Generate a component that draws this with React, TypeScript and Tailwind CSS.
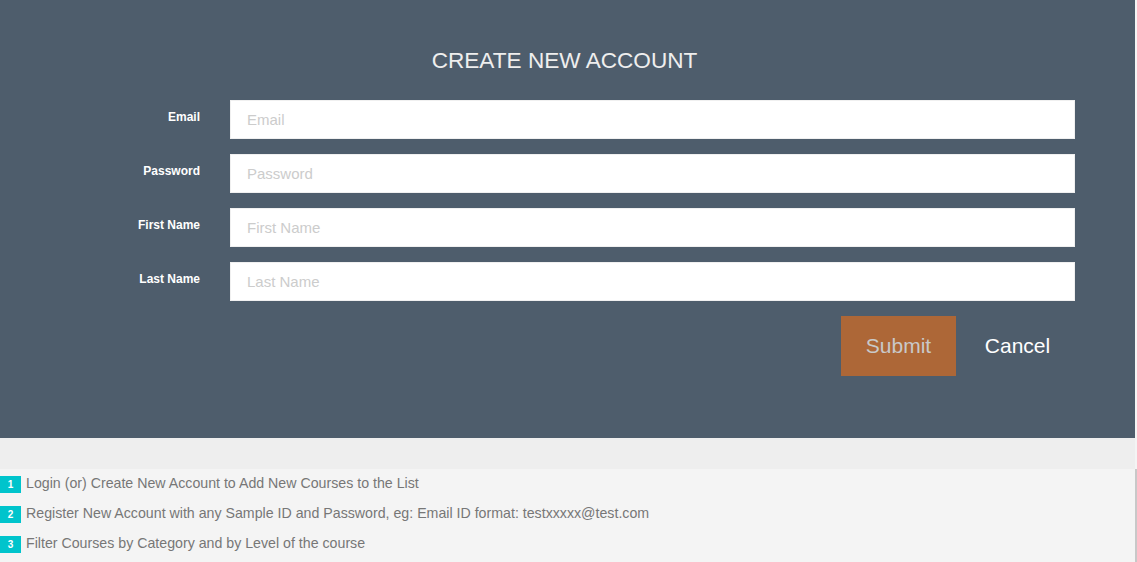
import React from 'react';

const fields = [
  { label: 'Email', type: 'email' },
  { label: 'Password', type: 'password' },
  { label: 'First Name', type: 'text' },
  { label: 'Last Name', type: 'text' },
];

const tips = [
  'Login (or) Create New Account to Add New Courses to the List',
  'Register New Account with any Sample ID and Password, eg: Email ID format: testxxxxx@test.com',
  'Filter Courses by Category and by Level of the course',
];

export default function App() {
  return (
    <div className="min-h-[562px] w-full bg-[#f4f4f4] font-['Liberation_Sans',Arial,sans-serif]">
      {/* Sign-up panel */}
      <section className="h-[438px] w-[1135px] bg-[#4e5d6c] pt-[48px]">
        <h1 className="mb-[26px] pr-[6px] text-center text-[22.6px] leading-[26px] text-[#eeeeee]">
          CREATE NEW ACCOUNT
        </h1>
        <form className="flex flex-col gap-[15px]" onSubmit={(e) => e.preventDefault()}>
          {fields.map((f) => (
            <div key={f.label} className="flex items-start gap-[30px]">
              <label className="w-[200px] pt-[9px] text-right text-[12px] font-bold leading-[17px] text-white">
                {f.label}
              </label>
              <input
                type={f.type}
                placeholder={f.label}
                className="h-[39px] w-[845px] border border-[#f0f0f0] bg-white px-[16px] text-[15px] text-[#555] outline-none placeholder:text-[#cccccc]"
              />
            </div>
          ))}
          <div className="flex w-[1075px] justify-end gap-[4px]">
            <button
              type="submit"
              className="h-[60px] w-[115px] bg-[#ad6737] text-[21px] text-[#c9c9c9]"
            >
              Submit
            </button>
            <button type="button" className="h-[60px] w-[115px] text-[21px] text-white">
              Cancel
            </button>
          </div>
        </form>
      </section>

      {/* Help notes */}
      <div className="h-[31px] w-[1135px] bg-[#eeeeee]" />
      <ul className="w-[1137px] border-r-2 border-[#c8c8c8] bg-[#f4f4f4] pb-[4px]">
        {tips.map((t, i) => (
          <li key={i} className="flex h-[30px] items-center gap-[5px]">
            <span className="flex h-[17px] w-[21px] items-center justify-center bg-[#00c4cc] text-[10px] font-bold text-white">
              {i + 1}
            </span>
            <span className="pb-[1px] text-[14.2px] text-[#777777]">{t}</span>
          </li>
        ))}
      </ul>
    </div>
  );
}
